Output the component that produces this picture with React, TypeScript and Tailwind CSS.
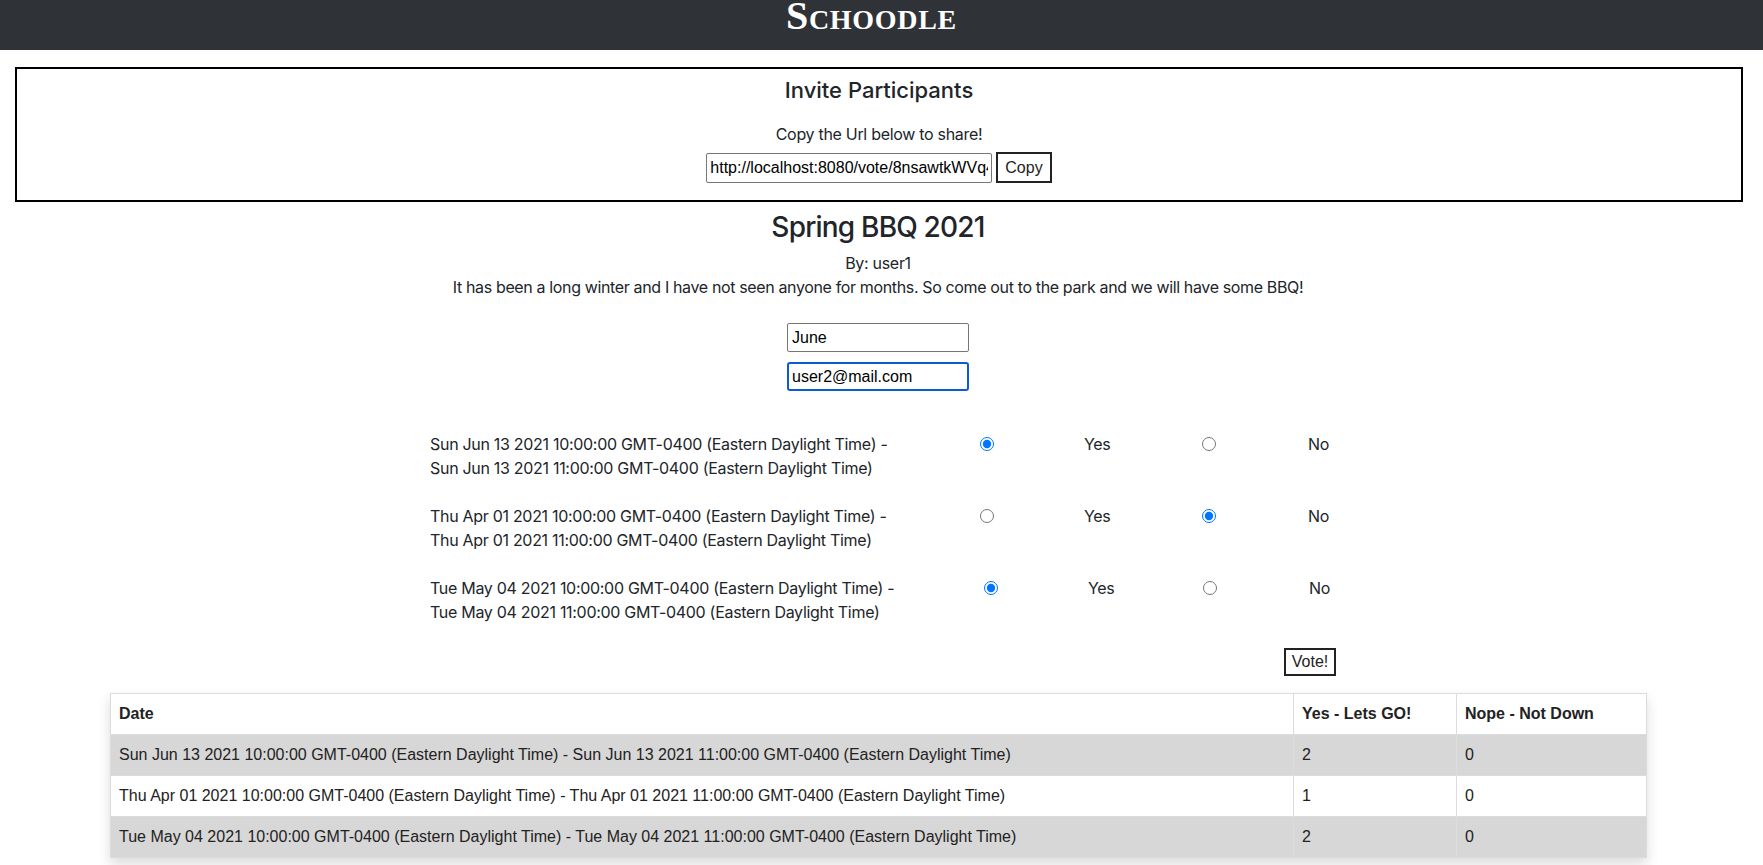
import React from "react";

const slots = [
  {
    from: "Sun Jun 13 2021 10:00:00 GMT-0400 (Eastern Daylight Time) -",
    to: "Sun Jun 13 2021 11:00:00 GMT-0400 (Eastern Daylight Time)",
    vote: "yes",
    first: "ml-0",
    second: "ml-[92px]",
  },
  {
    from: "Thu Apr 01 2021 10:00:00 GMT-0400 (Eastern Daylight Time) -",
    to: "Thu Apr 01 2021 11:00:00 GMT-0400 (Eastern Daylight Time)",
    vote: "no",
    first: "ml-0",
    second: "ml-[92px]",
  },
  {
    from: "Tue May 04 2021 10:00:00 GMT-0400 (Eastern Daylight Time) -",
    to: "Tue May 04 2021 11:00:00 GMT-0400 (Eastern Daylight Time)",
    vote: "yes",
    first: "ml-[4px]",
    second: "ml-[89px]",
  },
];

const results = [
  { date: "Sun Jun 13 2021 10:00:00 GMT-0400 (Eastern Daylight Time) - Sun Jun 13 2021 11:00:00 GMT-0400 (Eastern Daylight Time)", yes: 2, no: 0 },
  { date: "Thu Apr 01 2021 10:00:00 GMT-0400 (Eastern Daylight Time) - Thu Apr 01 2021 11:00:00 GMT-0400 (Eastern Daylight Time)", yes: 1, no: 0 },
  { date: "Tue May 04 2021 10:00:00 GMT-0400 (Eastern Daylight Time) - Tue May 04 2021 11:00:00 GMT-0400 (Eastern Daylight Time)", yes: 2, no: 0 },
];

function VoteRow({ slot, idx }: { slot: (typeof slots)[number]; idx: number }) {
  return (
    <div className="flex items-start">
      <div className="w-[550px] shrink-0 leading-6">
        <div>{slot.from}</div>
        <div>{slot.to}</div>
      </div>
      <div className="flex h-6 items-center">
        <input
          type="radio"
          name={`slot-${idx}`}
          defaultChecked={slot.vote === "yes"}
          className={`m-0 h-[14px] w-[14px] ${slot.first}`}
        />
        <span className="ml-[90px] w-[26px]">Yes</span>
        <input
          type="radio"
          name={`slot-${idx}`}
          defaultChecked={slot.vote === "no"}
          className={`m-0 h-[14px] w-[14px] ${slot.second}`}
        />
        <span className="ml-[92px]">No</span>
      </div>
    </div>
  );
}

export default function App() {
  return (
    <div className="min-h-screen bg-white text-[16px] tracking-[-0.3px] text-[#212529] font-['Inter','Liberation_Sans',sans-serif]">
      {/* Header */}
      <header className="h-[50px] overflow-hidden bg-[#2f3337] pr-[20px] text-center">
        <h1 className="pt-[1px] font-['Liberation_Serif',serif] text-[40px] font-bold leading-[30px] tracking-[0.7px] text-white [font-variant:small-caps]">
          Schoodle
        </h1>
      </header>

      {/* Invite box */}
      <section className="ml-[15px] mr-[20px] mt-[17px] flex h-[135px] flex-col items-center border-2 border-black">
        <h2 className="mt-[7px] text-[22px] font-medium leading-[28px] tracking-normal">Invite Participants</h2>
        <p className="mt-[18px] leading-6">Copy the Url below to share!</p>
        <div className="mt-[6px] flex items-center gap-[4px] tracking-normal">
          <input
            readOnly
            defaultValue="http://localhost:8080/vote/8nsawtkWVq4dZ"
            className="h-[30px] w-[286px] rounded-[2px] border border-[#767676] px-[3px] font-['Liberation_Sans',sans-serif] text-[16px] text-black"
          />
          <button className="h-[31px] border-2 border-[#222] bg-white px-[7px] font-['Liberation_Sans',sans-serif] text-[16px] text-[#222]">
            Copy
          </button>
        </div>
      </section>

      {/* Event */}
      <section className="flex flex-col items-center pr-[7px]">
        <h2 className="mt-[8px] text-[28px] font-medium leading-[34px] tracking-[-0.8px]">Spring BBQ 2021</h2>
        <p className="mt-[7px] leading-6">By: user1</p>
        <p className="leading-6 tracking-[-0.36px]">
          It has been a long winter and I have not seen anyone for months. So come out to the park and we will have some BBQ!
        </p>
        <input
          readOnly
          defaultValue="June"
          className="mt-[24px] h-[29px] w-[182px] rounded-[2px] border border-[#767676] px-[4px] font-['Liberation_Sans',sans-serif] text-[16px] tracking-normal text-black"
        />
        <input
          readOnly
          defaultValue="user2@mail.com"
          className="mt-[10px] h-[29px] w-[182px] rounded-[3px] border-2 border-[#0b5bd3] px-[3px] font-['Liberation_Sans',sans-serif] text-[16px] tracking-normal text-black outline-none"
        />
      </section>

      {/* Voting */}
      <section className="ml-[430px] mt-[41px] flex w-[906px] flex-col gap-6">
        {slots.map((s, i) => (
          <VoteRow key={i} slot={s} idx={i} />
        ))}
        <div className="flex justify-end">
          <button className="h-[28px] w-[52px] border-2 border-[#222] bg-white font-['Liberation_Sans',sans-serif] text-[16px] leading-none tracking-normal text-[#222]">
            Vote!
          </button>
        </div>
      </section>

      {/* Results */}
      <div className="ml-[110px] mt-[17px] w-[1537px] shadow-[0_6px_12px_rgba(0,0,0,0.14)]">
        <table className="w-full border-collapse font-['Liberation_Sans',Arial,sans-serif] text-[16px] tracking-normal text-[#222]">
          <thead>
            <tr className="h-[41px]">
              <th className="border border-[#dcdcdc] px-[8px] text-left font-bold">Date</th>
              <th className="w-[163px] border border-[#dcdcdc] px-[8px] text-left font-bold">Yes - Lets GO!</th>
              <th className="w-[190px] border border-[#dcdcdc] px-[8px] text-left font-bold">Nope - Not Down</th>
            </tr>
          </thead>
          <tbody>
            {results.map((r, i) => (
              <tr key={i} className={`h-[41px] ${i % 2 === 0 ? "bg-[#d7d7d7]" : "bg-white"}`}>
                <td className="border border-[#dcdcdc] px-[8px]">{r.date}</td>
                <td className="border border-[#dcdcdc] px-[8px]">{r.yes}</td>
                <td className="border border-[#dcdcdc] px-[8px]">{r.no}</td>
              </tr>
            ))}
          </tbody>
        </table>
      </div>
    </div>
  );
}
